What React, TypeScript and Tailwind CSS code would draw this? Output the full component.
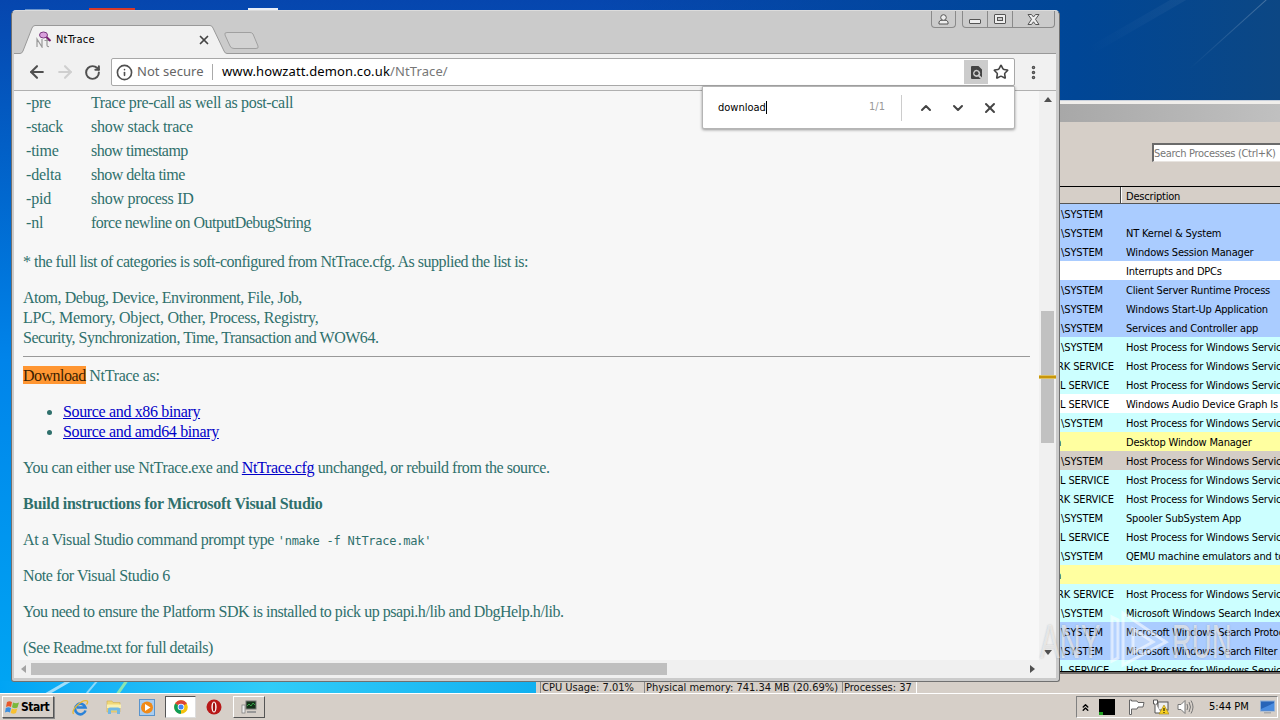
import React from 'react';
import {
  ArrowLeft,
  ArrowRight,
  ChevronDown,
  ChevronUp,
  ChevronsUp,
  Info,
  MoreVertical,
  RotateCw,
  Star,
  X,
} from 'lucide-react';

// --- Data ---

interface Option {
  flag: string;
  text: string;
  tracking: string;
}

interface ProcessRow {
  user: string;
  description: string;
  color: string;
}

const OPTIONS: Option[] = [
  { flag: '-pre', text: 'Trace pre-call as well as post-call', tracking: 'tracking-[-0.34px]' },
  { flag: '-stack', text: 'show stack trace', tracking: 'tracking-[-0.25px]' },
  { flag: '-time', text: 'show timestamp', tracking: 'tracking-[-0.55px]' },
  { flag: '-delta', text: 'show delta time', tracking: 'tracking-[-0.5px]' },
  { flag: '-pid', text: 'show process ID', tracking: 'tracking-[-0.27px]' },
  { flag: '-nl', text: 'force newline on OutputDebugString', tracking: 'tracking-[-0.53px]' },
];

const BLUE = 'bg-[#aaccff]';
const CYAN = 'bg-[#ccffff]';
const WHITE = 'bg-white';
const YELLOW = 'bg-[#ffffa0]';
const SELECTED = 'bg-[#d4cdc6]';

const SYSTEM = '\\SYSTEM';
const NETWORK = 'RK SERVICE';
const LOCAL = 'L SERVICE';
const HOST = 'Host Process for Windows Services';

const PROCESSES: ProcessRow[] = [
  { user: SYSTEM, description: '', color: BLUE },
  { user: SYSTEM, description: 'NT Kernel & System', color: BLUE },
  { user: SYSTEM, description: 'Windows Session Manager', color: BLUE },
  { user: '', description: 'Interrupts and DPCs', color: WHITE },
  { user: SYSTEM, description: 'Client Server Runtime Process', color: BLUE },
  { user: SYSTEM, description: 'Windows Start-Up Application', color: BLUE },
  { user: SYSTEM, description: 'Services and Controller app', color: BLUE },
  { user: SYSTEM, description: HOST, color: CYAN },
  { user: NETWORK, description: HOST, color: CYAN },
  { user: LOCAL, description: HOST, color: CYAN },
  { user: LOCAL, description: 'Windows Audio Device Graph Is', color: WHITE },
  { user: SYSTEM, description: HOST, color: CYAN },
  { user: 'n', description: 'Desktop Window Manager', color: YELLOW },
  { user: SYSTEM, description: HOST, color: SELECTED },
  { user: LOCAL, description: HOST, color: CYAN },
  { user: NETWORK, description: HOST, color: CYAN },
  { user: SYSTEM, description: 'Spooler SubSystem App', color: CYAN },
  { user: LOCAL, description: HOST, color: CYAN },
  { user: SYSTEM, description: 'QEMU machine emulators and tools', color: CYAN },
  { user: 'n', description: '', color: YELLOW },
  { user: NETWORK, description: HOST, color: CYAN },
  { user: SYSTEM, description: 'Microsoft Windows Search Indexer', color: CYAN },
  { user: SYSTEM, description: 'Microsoft Windows Search Protocol Host', color: BLUE },
  { user: SYSTEM, description: 'Microsoft Windows Search Filter Host', color: BLUE },
  { user: LOCAL, description: HOST, color: CYAN },
];

// --- Process list window ---

const userOffset = (user: string) => {
  if (user === NETWORK) return '-ml-[3px]';
  if (user === LOCAL) return 'ml-0';
  if (user === 'n') return '-ml-[5px]';
  return 'ml-px';
};

const ProcessWindow: React.FC = () => (
  <div className="absolute left-[536px] top-[100px] w-[760px] h-[594px] flex flex-col bg-[#d6cfc8] border-t border-[#c8d0dc]">
    <div className="h-[3px] bg-[#f0eeeb] shrink-0" />
    <div className="h-[18px] bg-linear-to-r from-[#808080] from-20% to-[#c2c2c2] shrink-0" />
    <div className="h-[64px] shrink-0 flex justify-end pt-[21px]">
      <div className="w-[144px] h-[19px] bg-white border-2 border-r-0 border-[#6a6a6a] border-b border-b-[#e8e4e0] text-[#777] leading-[17px] whitespace-nowrap tracking-[-0.3px]">
        Search Processes (Ctrl+K)
      </div>
    </div>
    <div className="h-[18px] shrink-0 ml-[524px] flex border-t border-black bg-[#d6cfc8] border-b border-b-[#555] text-black">
      <div className="w-[61px] border-r border-[#444]" />
      <div className="pl-[4px] pt-px leading-[17px] border-l border-white tracking-[-0.2px]">Description</div>
    </div>
    <div className="h-[468px] shrink-0 ml-[524px] overflow-hidden border-b border-black bg-white text-black">
      {PROCESSES.map((row, i) => (
        <div key={i} className={`h-[19px] flex pt-px leading-[19px] whitespace-nowrap overflow-hidden ${row.color}`}>
          <span className="w-[66px] shrink-0 tracking-[-0.12px]">
            <span className={`inline-block ${userOffset(row.user)}`}>{row.user}</span>
          </span>
          <span className="tracking-[-0.18px]">{row.description}</span>
        </div>
      ))}
    </div>
    <div className="h-[2px] shrink-0 bg-[#6e6a66]" />
    <div className="flex-1 flex items-end pl-1 gap-[7px] text-[#111] leading-[11px] whitespace-nowrap border-b border-white">
      <span className="w-[97px] border-l border-[#888] pl-px">CPU Usage: 7.01%</span>
      <span className="w-[191px] border-l border-[#888] pl-px">Physical memory: 741.34 MB (20.69%)</span>
      <span className="w-[75px] border-l border-r border-l-[#888] border-r-white pl-px">Processes: 37</span>
    </div>
  </div>
);

// --- Browser window ---

const WindowButtons: React.FC = () => (
  <div className="absolute right-[3px] top-0 flex gap-[6px] text-[#555]">
    <div className="w-[25px] h-[17px] border border-t-0 border-[#8a8a8a] rounded-b-[4px] flex items-center justify-center">
      <svg width="11" height="11" viewBox="0 0 11 11" fill="#eee" stroke="#555">
        <path d="M1 10V8Q1 6 5.500 6T10 8V10Z" />
        <circle cx="5.500" cy="3.500" r="2.800" />
      </svg>
    </div>
    <div className="h-[17px] border border-t-0 border-[#8a8a8a] rounded-b-[4px] flex">
      <div className="w-[24px] flex justify-center items-end pb-[3px]">
        <div className="w-[12px] h-[5px] border border-[#555] bg-[#eee] rounded-[1px]" />
      </div>
      <div className="w-[26px] border-x border-[#8a8a8a] flex justify-center items-center">
        <div className="w-[12px] h-[10px] border border-[#555] bg-[#eee] rounded-[1px] flex items-center justify-center">
          <div className="w-[6px] h-[4px] border border-[#555] bg-[#ccc]" />
        </div>
      </div>
      <div className="w-[41px] flex justify-center items-center">
        <svg width="13" height="11" viewBox="0 0 13 11" fill="#eee" stroke="#555">
          <path d="M1 .5H4.500L6.500 3L8.500 .5H12L8.500 5.300L12 10.500H8.500L6.500 7.800L4.500 10.500H1L4.500 5.300Z" />
        </svg>
      </div>
    </div>
  </div>
);

const TabStrip: React.FC = () => (
  <div className="relative h-[43px] shrink-0">
    {/* tab outlines and the strip's bottom edge */}
    <svg className="absolute left-0 top-0" width="1046" height="43" viewBox="0 0 1046 43" fill="none">
      <path d="M2 42.500H8Q10 42.500 11 40L20 17Q21 14.500 23 14.500H198Q200 14.500 201 17L212 40Q213 42.500 215 42.500H1044V43H2Z" fill="#f1f1f1" />
      <path d="M2 42.500H8Q10 42.500 11 40L20 17Q21 14.500 23 14.500H198Q200 14.500 201 17L212 40Q213 42.500 215 42.500H1044" stroke="#999" />
      <path d="M215 21.500H238Q240 21.500 241 23L246 35Q247 37.500 244 37.500H222Q219 37.500 218 35L213 24Q212 21.500 215 21.500Z" fill="#d2d2d2" stroke="#a0a0a0" />
    </svg>
    <div className="relative flex items-center pl-[24px] pt-[20px] w-[200px] text-black">
      <svg width="16" height="17" viewBox="0 0 16 17" fill="none">
        <path d="M1 16V8L6 16V8M11 7V14Q11 16 13 15.500M8.500 9.500H13" stroke="#999" strokeWidth="1.200" />
        <ellipse cx="7.500" cy="4" rx="4" ry="3" fill="#d9a0dc" stroke="#7a3a80" />
        <path d="M10.500 6L14.500 10" stroke="#7a2070" strokeWidth="2" />
      </svg>
      <span className="ml-[4px] flex-1 leading-4 tracking-[0.2px]">NtTrace</span>
    </div>
    <X className="absolute left-[185px] top-[22px] text-[#444]" size={14} strokeWidth={3} />
    <WindowButtons />
  </div>
);

const Toolbar: React.FC = () => (
  <div className="h-[37px] shrink-0 bg-[#f1f1f1] border-b border-[#b0b0b0] flex items-center pl-[13px] mx-[2px]">
    <ArrowLeft size={20} strokeWidth={2.500} className="text-[#505050]" />
    <ArrowRight size={20} strokeWidth={2.500} className="text-[#cfcfcf] ml-[8px]" />
    <RotateCw size={17} strokeWidth={2.800} className="text-[#505050] ml-[9px] mr-px" />
    <div className="ml-[9px] w-[904px] h-[28px] bg-white border border-[#a8a8a8] rounded-[2px] flex items-center text-[13px]">
      <Info size={17} strokeWidth={2.300} className="text-[#505050] ml-[4px]" />
      <span className="ml-[4px] text-[#666] w-[75px] whitespace-nowrap font-['Noto_Sans'] tracking-[0.05px]">Not secure</span>
      <div className="w-px h-[16px] bg-[#aaa]" />
      <span className="ml-[9px] text-black whitespace-nowrap flex-1 font-['Noto_Sans'] tracking-[0.12px]">
        www.howzatt.demon.co.uk<span className="text-[#777]">/NtTrace/</span>
      </span>
      <div className="w-[24px] h-[24px] bg-[#cccccc] flex items-center justify-center">
        <svg width="13" height="15" viewBox="0 0 13 15">
          <path d="M2 1H8.500L12 4.500V12.500L9.700 10.300A3.600 3.600 0 1 0 8.300 11.600L10.800 14H2Q1 14 1 13V2Q1 1 2 1Z" fill="#444" />
          <circle cx="6.500" cy="8.300" r="2" fill="#444" />
        </svg>
      </div>
      <Star size={16} strokeWidth={2.400} className="text-[#444] ml-[5px] mr-[5px]" />
    </div>
    <MoreVertical size={17} strokeWidth={3} className="text-[#505050] ml-[10px]" />
  </div>
);

const FindBar: React.FC = () => (
  <div className="absolute left-[690px] top-[75px] w-[313px] h-[43px] bg-white border border-[#b5b5b5] rounded-b-[2px] shadow-[0_1px_3px_rgba(0,0,0,0.4)] flex items-center pl-[15px] text-black">
    <span className="border-r border-black leading-[13px]">download</span>
    <span className="ml-auto text-[#999]">1/1</span>
    <div className="ml-[16px] w-px h-[26px] bg-[#ccc]" />
    <ChevronUp size={16} strokeWidth={3} className="text-[#444] ml-[16px]" />
    <ChevronDown size={16} strokeWidth={3} className="text-[#444] ml-[16px]" />
    <X size={16} strokeWidth={3} className="text-[#444] ml-[16px] mr-[16px]" />
  </div>
);

const PageContent: React.FC = () => (
  <div className="flex-1 overflow-hidden bg-[#f7f7f7] pl-[9px] pr-[9px] text-[#2f706c] text-[16px] leading-[20px] font-['Liberation_Serif',serif] whitespace-nowrap">
    {OPTIONS.map((option) => (
      <div key={option.flag} className="flex h-[24px] items-center pl-[3px]">
        <span className="w-[65px] tracking-[-0.2px]">{option.flag}</span>
        <span className={option.tracking}>{option.text}</span>
      </div>
    ))}
    <p className="mt-[17px] tracking-[-0.49px]">
      * the full list of categories is soft-configured from NtTrace.cfg. As supplied the list is:
    </p>
    <p className="mt-[16px]">
      <span className="tracking-[-0.46px]">Atom, Debug, Device, Environment, File, Job,</span>
      <br />
      <span className="tracking-[-0.27px]">LPC, Memory, Object, Other, Process, Registry,</span>
      <br />
      <span className="tracking-[-0.47px]">Security, Synchronization, Time, Transaction and WOW64.</span>
    </p>
    <hr className="mt-[8px] border-t-0 h-px bg-[#999]" />
    <p className="mt-[9px] tracking-[-0.3px]">
      <span className="bg-[#ff9632] text-[#3c1e00] tracking-[-0.5px] pt-px">Download</span> NtTrace as:
    </p>
    <ul className="mt-[16px] pl-[40px] list-disc tracking-[-0.35px]">
      <li><a className="text-[#0000c8] underline">Source and x86 binary</a></li>
      <li><a className="text-[#0000c8] underline">Source and amd64 binary</a></li>
    </ul>
    <p className="mt-[16px] tracking-[-0.35px]">
      You can either use NtTrace.exe and <a className="text-[#0000c8] underline">NtTrace.cfg</a>
      <span className="tracking-[-0.44px]"> unchanged, or rebuild from the source.</span>
    </p>
    <p className="mt-[16px] font-bold tracking-[-0.27px]">Build instructions for Microsoft Visual Studio</p>
    <p className="mt-[16px] tracking-[-0.4px]">
      At a Visual Studio command prompt type{' '}
      <code className="text-[12px] leading-none tracking-[-0.25px] font-['DejaVu_Sans_Mono',monospace]">'nmake -f NtTrace.mak'</code>
    </p>
    <p className="mt-[16px] tracking-[-0.38px]">Note for Visual Studio 6</p>
    <p className="mt-[16px] tracking-[-0.45px]">
      You need to ensure the Platform SDK is installed to pick up psapi.h/lib and DbgHelp.h/lib.
    </p>
    <p className="mt-[16px] tracking-[-0.48px]">(See Readme.txt for full details)</p>
  </div>
);

const VerticalScrollbar: React.FC = () => (
  <div className="relative w-[17px] bg-[#f0f0f0] flex flex-col items-center">
    <div className="mt-[6px] border-x-4 border-x-transparent border-b-[5px] border-b-[#505050]" />
    <div className="mt-[209px] w-[13px] h-[132px] bg-[#c1c1c1] shrink-0" />
    <div className="mt-auto mb-[5px] border-x-4 border-x-transparent border-t-[5px] border-t-[#505050]" />
    {/* find-in-page tick mark */}
    <div className="absolute left-0 top-[284px] w-[17px] h-[4px] bg-[#c8960a] border-y border-[#dfc060]" />
  </div>
);

const HorizontalScrollbar: React.FC = () => (
  <div className="h-[18px] shrink-0 bg-[#f0f0f0] mx-[2px] flex items-center">
    <div className="ml-[7px] border-y-4 border-y-transparent border-r-[5px] border-r-[#a3a3a3]" />
    <div className="ml-[5px] w-[636px] h-[12px] bg-[#bfbfbf]" />
    <div className="ml-auto mr-[21px] border-y-4 border-y-transparent border-l-[5px] border-l-[#505050]" />
  </div>
);

const BrowserWindow: React.FC = () => (
  <div className="absolute left-[11px] top-[10px] w-[1049px] h-[672px] bg-[#cbcbcb] border border-[#707070] border-t-[#dcdcdc] rounded-t-[5px] rounded-b-[3px] flex flex-col pb-[3px] pr-px">
    <TabStrip />
    <Toolbar />
    <div className="flex-1 min-h-0 flex mx-[2px]">
      <PageContent />
      <VerticalScrollbar />
    </div>
    <HorizontalScrollbar />
    <FindBar />
  </div>
);

// --- Taskbar ---

const StartButton: React.FC = () => (
  <button className="ml-[2px] w-[52px] h-[22px] bg-[#d6cfc8] border border-white border-r-[#555] border-b-[#555] shadow-[1px_1px_0_#888] flex items-center pl-[2px] font-bold text-[12px] text-black">
    <svg width="15" height="15" viewBox="0 0 15 15">
      <path d="M2 2Q4.500 .5 7 2L6 7Q3.500 5.500 1 7Z" fill="#e8572a" />
      <path d="M8 2.500Q11 4 14 2.500L12.500 7.500Q10 9 7 7.300Z" fill="#7ab83c" />
      <path d="M.8 8Q3.500 6.500 6 8L5 12.500Q2.500 11 0 12.500Z" fill="#3a8ee0" />
      <path d="M6.800 8.500Q9.500 10 12.300 8.500L11 13Q8.500 14.500 5.700 13Z" fill="#f8c030" />
    </svg>
    <span className="tracking-[-0.5px] ml-px">Start</span>
  </button>
);

const ExplorerIcon: React.FC = () => (
  <svg width="17" height="17" viewBox="0 0 17 17" fill="none">
    <path d="M13.500 11.500A5.300 5.300 0 1 1 13.500 8.500H5" stroke="#2a82d8" strokeWidth="2.600" />
    <path d="M1.500 15Q-.5 12 5 6.500Q11 .5 15 1.800Q16.500 2.700 14.500 5.500" stroke="#e8b830" strokeWidth="1.300" />
  </svg>
);

const FolderIcon: React.FC = () => (
  <svg width="16" height="16" viewBox="0 0 16 16">
    <path d="M1 2H6L7 3.500H14V13H1Z" fill="#f0d878" stroke="#d0b050" strokeWidth=".6" />
    <path d="M1 5.500H15V9H1Z" fill="#faf0b0" />
    <path d="M2 15V10Q2 8.500 4 8.500H12Q14 8.500 14 10V15H11V11.500H5V15Z" fill="#72b8e4" />
  </svg>
);

const PlayerIcon: React.FC = () => (
  <svg width="16" height="17" viewBox="0 0 16 17">
    <rect x=".5" y=".5" width="15" height="16" fill="#a9cdf0" stroke="#5a94cc" />
    <circle cx="8" cy="8.500" r="6" fill="#f08a18" />
    <path d="M6 5L11.500 8.500L6 12Z" fill="#fff" />
  </svg>
);

const ChromeIcon: React.FC = () => (
  <svg width="14" height="14" viewBox="0 0 14 14">
    <circle cx="7" cy="7" r="6.800" fill="#f4c20d" />
    <path d="M7 7L1.100 3.600A6.800 6.800 0 0 1 12.900 3.600Z" fill="#db4437" />
    <path d="M7 7L1.100 3.600A6.800 6.800 0 0 0 7 13.800Z" fill="#0f9d58" />
    <circle cx="7" cy="7" r="3.300" fill="#fff" />
    <circle cx="7" cy="7" r="2.500" fill="#4285f4" />
  </svg>
);

const OperaIcon: React.FC = () => (
  <svg width="16" height="16" viewBox="0 0 16 16">
    <circle cx="8" cy="8" r="7.500" fill="#b81818" />
    <ellipse cx="8" cy="8" rx="2.600" ry="5.500" fill="#fff" />
    <ellipse cx="8" cy="8" rx="1.200" ry="4.500" fill="#a01010" />
  </svg>
);

const MonitorIcon: React.FC = () => (
  <svg width="17" height="15" viewBox="0 0 17 15">
    <rect x="5" y="1" width="10" height="8" fill="#123018" stroke="#777" />
    <path d="M6 6L8 4L10 6L12 3L14 5" stroke="#38a048" fill="none" />
    <rect x="1" y="5" width="3" height="8" fill="#eee" stroke="#777" strokeWidth=".7" />
    <rect x="6" y="11" width="9" height="2" fill="#999" />
  </svg>
);

const Tray: React.FC = () => (
  <div className="ml-auto mr-[2px] w-[202px] h-[22px] border border-[#808080] border-r-white border-b-white flex items-center text-black">
    <ChevronsUp size={11} strokeWidth={3} className="ml-[3px]" />
    <div className="ml-[8px] w-[16px] h-[16px] bg-black flex items-end">
      <div className="w-[4px] h-[3px] bg-[#20a020]" />
    </div>
    <svg className="ml-[13px]" width="17" height="16" viewBox="0 0 17 16" fill="#fff" stroke="#666">
      <path d="M1.500 1V15.500H3.500V10H9L10 8H15L16 3.500H10L9 2H3.500V1Z" />
    </svg>
    <svg className="ml-[8px]" width="16" height="16" viewBox="0 0 16 16">
      <rect x="5" y="3" width="10" height="8" fill="#eee" stroke="#555" />
      <path d="M.5 1V5H2V14H8M.5 1H4.500V5H3" fill="#fff" stroke="#555" />
      <path d="M11 6L16 15H6Z" fill="#f8d020" stroke="#a08010" strokeWidth=".6" />
      <path d="M11 9V12M11 13V14" stroke="#000" />
    </svg>
    <svg className="ml-[8px]" width="17" height="16" viewBox="0 0 17 16" fill="#fff" stroke="#777">
      <path d="M1 5.500H4L8 1.500V14.500L4 10.500H1Z" />
      <path d="M10 5Q11.500 8 10 11M12 3Q15 8 12 13M14 1.500Q18 8 14 14.500" fill="none" />
    </svg>
    <span className="ml-[15px] w-[51px] whitespace-nowrap pt-px">5:44 PM</span>
    <svg width="15" height="14" viewBox="0 0 15 14">
      <rect x=".5" y="1" width="14" height="10" fill="#2864b8" stroke="#90b0d8" />
      <path d="M1 9L14 3V10.500H1Z" fill="#4a8ce0" />
      <rect x="4" y="12" width="7" height="1.500" fill="#aaa" />
    </svg>
  </div>
);

const Taskbar: React.FC = () => (
  <div className="absolute left-0 top-[693px] w-[1280px] h-[27px] bg-[#d6cfc8] border-t border-white flex items-center">
    <StartButton />
    <div className="ml-[18px] flex items-center gap-[17px]">
      <ExplorerIcon />
      <FolderIcon />
      <PlayerIcon />
    </div>
    <div className="ml-[10px] w-[31px] h-[22px] bg-white border border-[#555] border-r-[#ddd] border-b-[#ddd] flex items-center justify-center">
      <ChromeIcon />
    </div>
    <div className="ml-[10px]">
      <OperaIcon />
    </div>
    <div className="ml-[11px] w-[32px] h-[22px] border border-white border-r-[#555] border-b-[#555] flex items-center justify-center">
      <MonitorIcon />
    </div>
    <Tray />
  </div>
);

// --- Watermark ---

const Watermark: React.FC = () => (
  <div className="absolute left-[1040px] top-[609px] h-[60px] flex items-center text-white/60 text-[49px] leading-none font-['Liberation_Sans',sans-serif] [text-shadow:0_0_2px_rgba(120,120,120,0.45)]">
    <span className="w-[70px] pt-[5px] origin-left scale-x-[0.6]">ANY</span>
    <svg width="62" height="60" viewBox="0 0 62 60" fill="#fff" fillOpacity=".15" stroke="#fff" strokeOpacity=".55" strokeWidth="3">
      <path d="M2 8L8 11V49L2 52Z" />
      <path d="M13 4V56L56 33Z" />
      <path d="M23 20V44L43 33Z" />
    </svg>
    <span className="w-[60px] pt-[5px] origin-left scale-x-[0.56]">RUN</span>
  </div>
);

const App: React.FC = () => (
  <div className="relative w-[1280px] h-[720px] overflow-hidden bg-linear-to-b from-[#0646ae] via-[#0084ea] to-[#00a8f4] text-[11px] font-['DejaVu_Sans_Condensed','DejaVu_Sans',sans-serif]">
    <div className="absolute left-[600px] top-0 w-[680px] h-[110px] overflow-hidden bg-linear-to-r from-[#0646ae]/0 via-[#004696] via-70% to-[#0c4784]">
      {/* wallpaper light rays */}
      <div className="absolute left-[575px] top-[32px] w-[110px] h-px bg-linear-to-r from-white/0 to-white/25 -rotate-[42deg]" />
      <div className="absolute left-[480px] top-[18px] w-[120px] h-[8px] bg-linear-to-r from-white/0 to-white/5 -rotate-[30deg]" />
    </div>
    {/* desktop icons peeking above the browser */}
    <div className="absolute left-[89px] top-[8px] w-[46px] h-[3px] bg-[#d83a28]" />
    <div className="absolute left-[248px] top-[8px] w-[30px] h-[3px] bg-[#e8eef8]" />
    <div className="absolute left-[25px] top-[9px] w-[24px] h-[2px] bg-[#6a94cc]" />
    <div className="absolute left-0 top-[681px] w-[536px] h-[13px] bg-linear-to-r from-[#00a4f4] via-[#30ccf8] to-[#10b0f0] overflow-hidden">
      <div className="absolute left-[44px] top-[5px] w-[28px] h-[3px] bg-white/60 -rotate-[30deg]" />
      <div className="absolute left-[84px] top-[5px] w-[16px] h-[2px] bg-white/50 -rotate-[50deg]" />
      <div className="absolute left-[114px] top-[5px] w-[16px] h-[3px] bg-[#a8f0a0]/80 -rotate-[55deg]" />
    </div>
    <ProcessWindow />
    <BrowserWindow />
    <Watermark />
    <Taskbar />
  </div>
);

export default App;
